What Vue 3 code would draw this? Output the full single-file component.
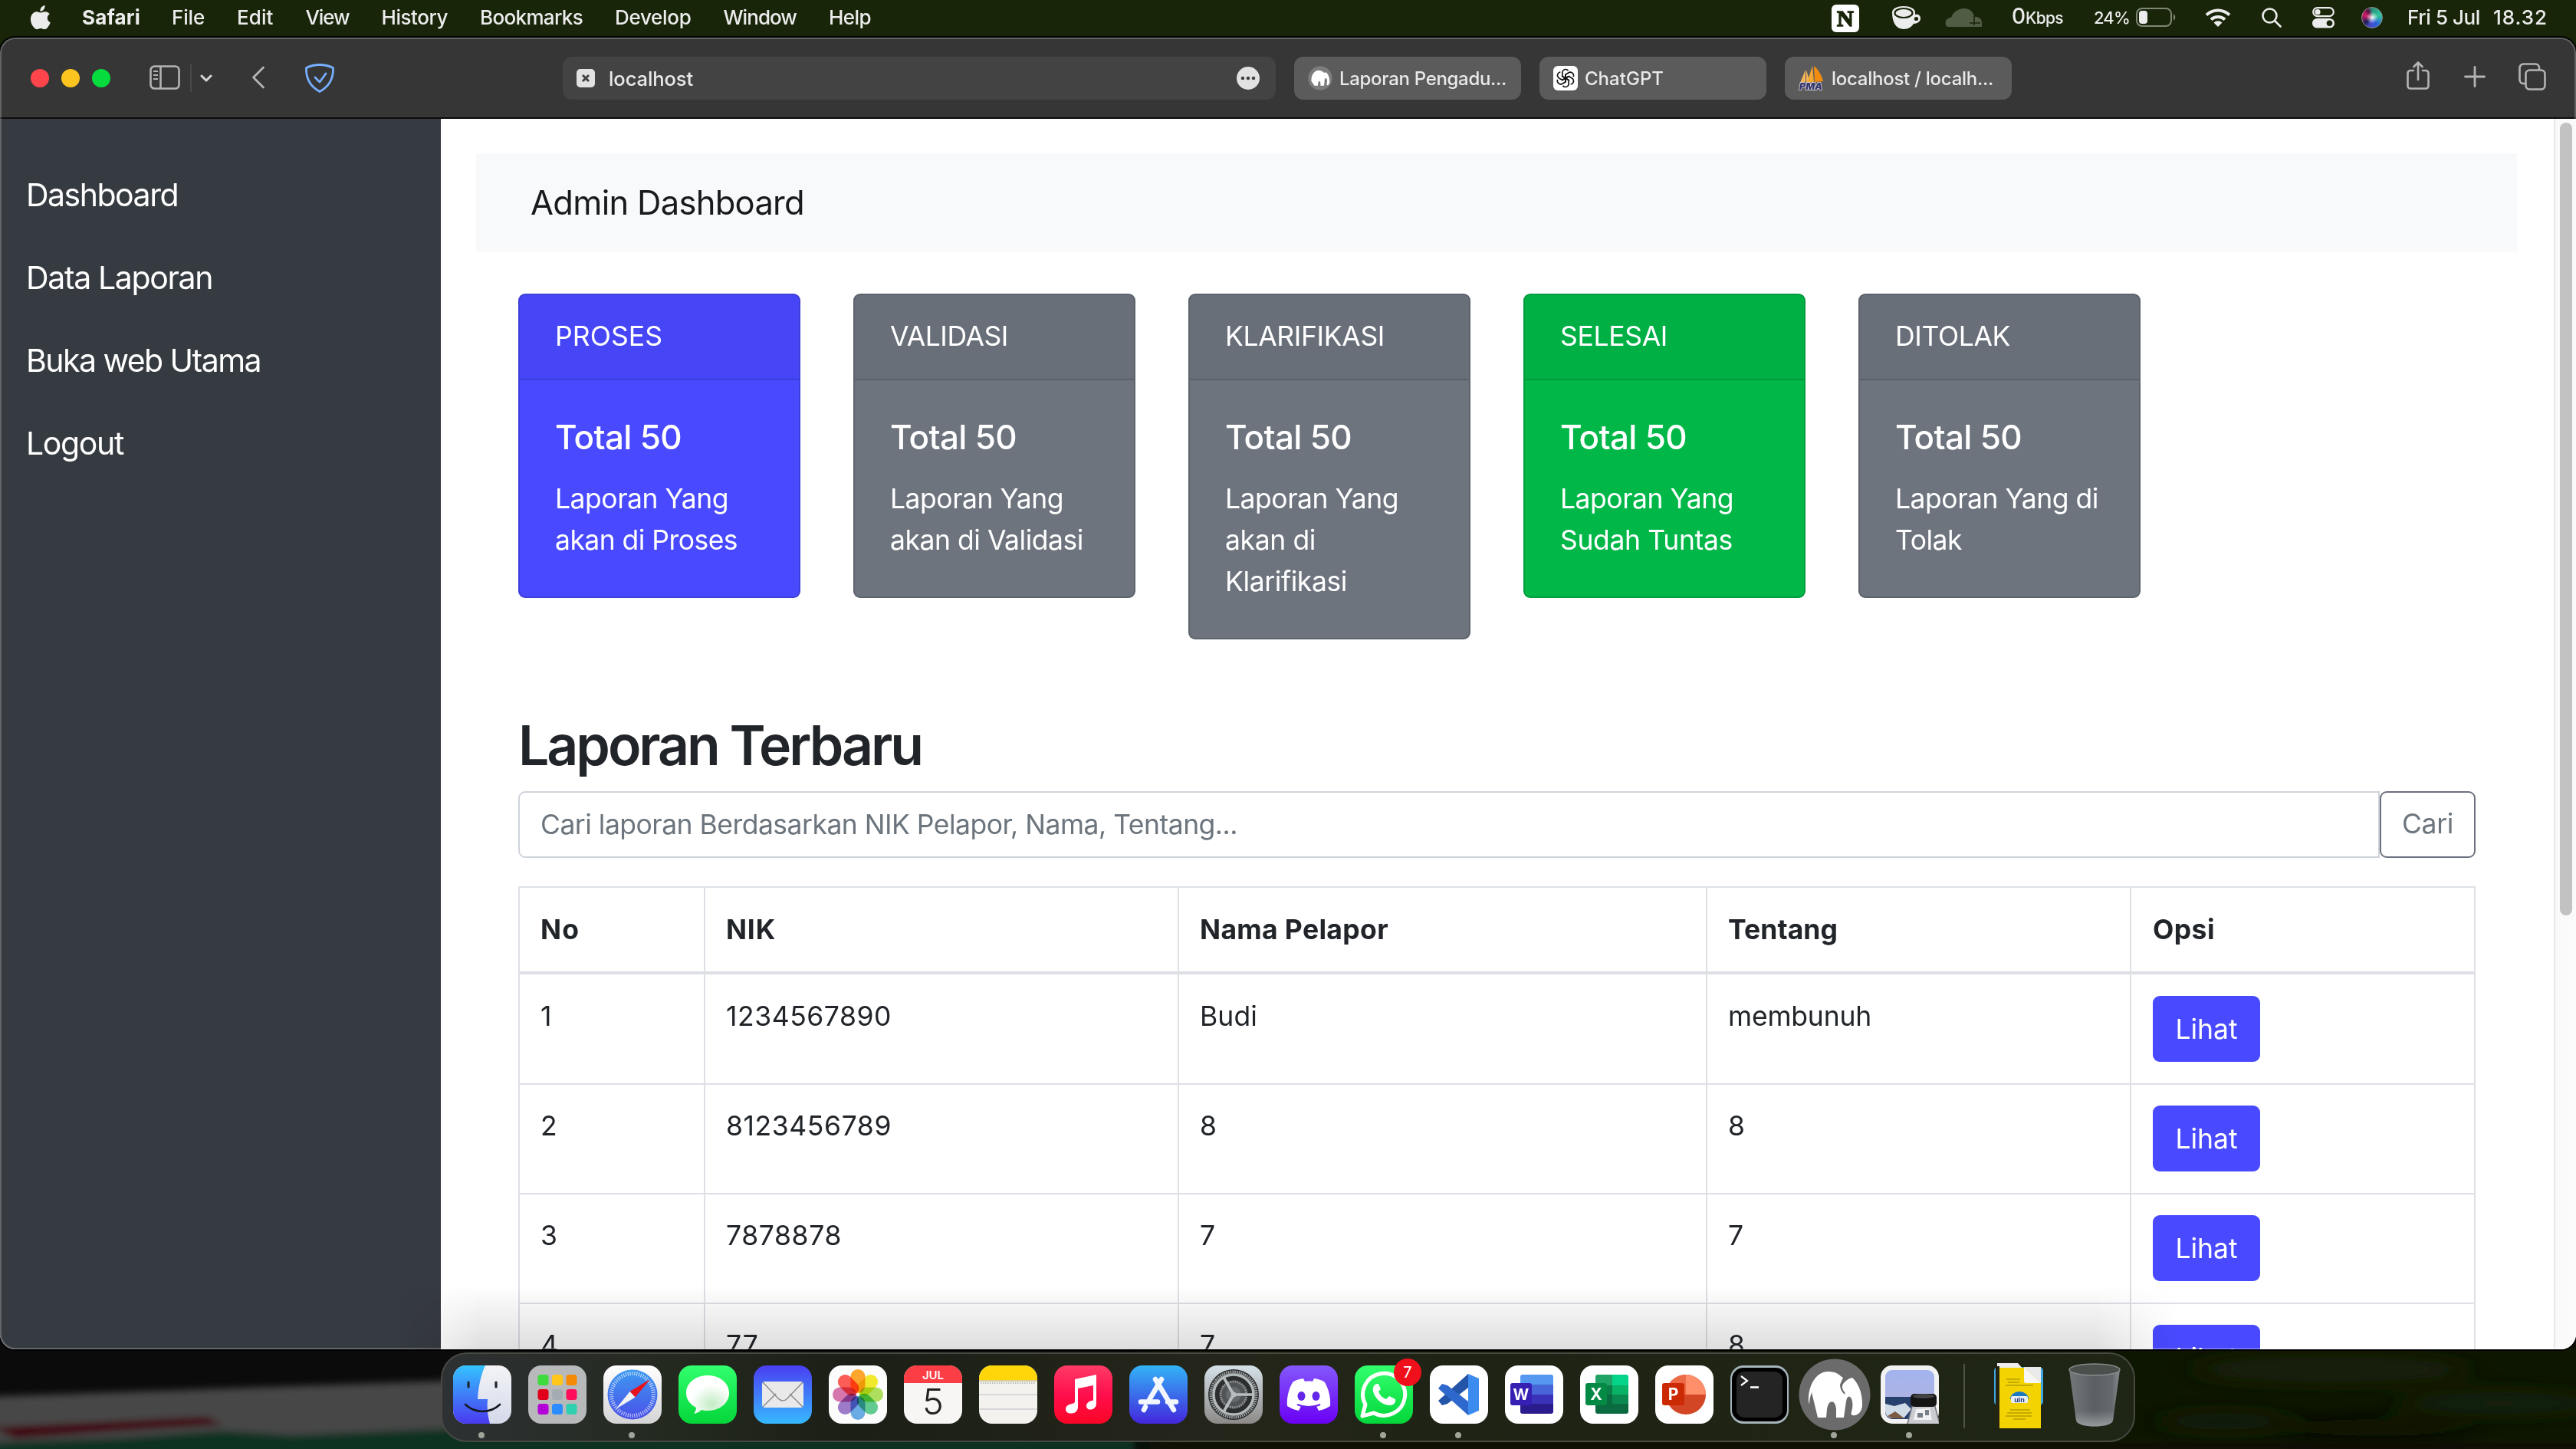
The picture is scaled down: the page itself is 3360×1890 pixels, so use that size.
<script setup>
// Spreads letter-spacing so that a label takes up the given width in pixels.
const vFit = {
  mounted(el, { value }) {
    if (!value) return
    el.style.letterSpacing = '0px'
    const natural = el.getBoundingClientRect().width
    const count = el.textContent.length
    el.style.letterSpacing = ((value - natural) / count).toFixed(3) + 'px'
  },
}

const menus = [
  ['File', 43], ['Edit', 47.500], ['View', 57], ['History', 86.500], ['Bookmarks', 134],
  ['Develop', 99.500], ['Window', 95.500], ['Help', 55],
]

const links = [
  ['Dashboard', 198], ['Data Laporan', 243], ['Buka web Utama', 306], ['Logout', 127],
]

const cards = [
  { head: 'PROSES', w: 140, tone: 'blue', lines: [['Laporan Yang', 226], ['akan di Proses', 238]] },
  { head: 'VALIDASI', w: 154, tone: 'grey', lines: [['Laporan Yang', 226], ['akan di Validasi', 252]] },
  { head: 'KLARIFIKASI', w: 208, tone: 'grey', lines: [['Laporan Yang', 226], ['akan di', 118], ['Klarifikasi', 159]] },
  { head: 'SELESAI', w: 140, tone: 'green', lines: [['Laporan Yang', 226], ['Sudah Tuntas', 225]] },
  { head: 'DITOLAK', w: 150, tone: 'grey', lines: [['Laporan Yang di', 265], ['Tolak', 87]] },
]

const heads = [['No', 51], ['NIK', 65], ['Nama Pelapor', 246], ['Tentang', 143], ['Opsi', 81]]
const rows = [
  [['1', 0], ['1234567890', 216], ['Budi', 75], ['membunuh', 187]],
  [['2', 0], ['8123456789', 216], ['8', 0], ['8', 0]],
  [['3', 0], ['7878878', 151], ['7', 0], ['7', 0]],
  [['4', 0], ['77', 43], ['7', 0], ['8', 0]],
]

const petals = ['#ff9500', '#f2e800', '#9fdb3a', '#3fc37a', '#4a9be0', '#8a5fc0', '#d05a9e', '#ff3b30']
const pads = ['#3ddb3d', '#ffc61a', '#f58a07', '#e0001b', '#a3adb2', '#ff0f5b', '#b400d8', '#2a8cff', '#2fd0b0']
const ticks = Array.from({ length: 60 }, (_, i) => i * 6)
</script>

<template>
  <div class="screen">
    <svg class="wallpaper" viewBox="0 0 3360 140" preserveAspectRatio="none">
      <defs>
        <filter id="soft" x="-5%" y="-50%" width="110%" height="200%"><feGaussianBlur stdDeviation="5" /></filter>
        <filter id="wide" x="-5%" y="-50%" width="110%" height="200%"><feGaussianBlur stdDeviation="26 12" /></filter>
      </defs>
      <rect width="3360" height="140" fill="#0a0b0a" />
      <rect x="1500" width="1900" height="140" fill="#0e1406" filter="url(#wide)" />
      <g filter="url(#soft)">
        <path d="M-20 72L620 50V140H-20Z" fill="#474747" />
        <path d="M-20 132L150 126L290 116L380 122L620 112H1480V180H-20Z" fill="#0a3022" />
        <path d="M-10 112L270 98L290 108L160 116L20 126Z" fill="#400410" />
      </g>
      <g filter="url(#wide)">
        <ellipse cx="3040" cy="36" rx="180" ry="16" fill="#1a240c" />
        <ellipse cx="3260" cy="80" rx="130" ry="14" fill="#182009" />
        <ellipse cx="2900" cy="104" rx="90" ry="12" fill="#141b08" />
        <ellipse cx="3100" cy="112" rx="130" ry="12" fill="#070a04" />
      </g>
    </svg>

    <header class="menubar">
      <svg class="apple" viewBox="0 0 26 32">
        <path d="M18.600 0c.2 2.300-.7 4.300-1.900 5.700-1.200 1.400-2.800 2.200-4.300 2.100-.2-2.100.7-4.200 1.800-5.500C15.400 1 17.200.1 18.600 0zM24.800 11.300c-1.900 1.200-3 3-3 5.200 0 2.600 1.500 4.700 3.900 5.700-.5 1.700-1.300 3.300-2.300 4.800-1.400 2.100-2.800 4.200-5 4.200s-2.800-1.300-5.300-1.300c-2.400 0-3.200 1.300-5.200 1.300-2.200 0-3.700-2.100-5.100-4.100C-.6 22.300-.9 15.300 1.800 11.700c1.500-2.200 3.700-3.400 5.900-3.400 2.300 0 3.700 1.300 5.500 1.300s2.900-1.300 5.600-1.300c2.100 0 4.600 1.100 6 3z" fill="#ececec" />
      </svg>
      <b v-fit="76">Safari</b>
      <nav><span v-for="m in menus" :key="m[0]" v-fit="m[1]">{{ m[0] }}</span></nav>
      <div class="status">
        <span class="notion">N</span>
        <svg width="38" height="32" viewBox="0 0 38 32"><path d="M1 9C1 4 8 1 16 1s15 3 15 8v3c4-1 7 1 7 5s-4 7-9 7c-3 4-6 7-13 7C6 31 1 22 1 9z" fill="#ececec" /><ellipse cx="16" cy="10" rx="11.500" ry="6" fill="#ececec" stroke="#182509" stroke-width="2.200" /><circle cx="32.500" cy="17.500" r="2.600" fill="#182509" /></svg>
        <svg width="48" height="24" viewBox="0 0 48 24" class="m32"><path d="M3 24C-2 20 1 12 8 12 10 5 17 0 25 0s12 5 13 11c6-1 10 3 10 8v5z" fill="#515c45" /><path d="M38 10v12M32 19h14" stroke="#182509" stroke-width="1.500" /></svg>
        <span class="kbps m39"><span class="zero">0</span><span v-fit="49">Kbps</span></span>
        <span class="pct" v-fit="47">24%</span>
        <svg width="52" height="26" viewBox="0 0 52 26" class="m8"><rect x="1" y="1" width="45" height="23" rx="7" fill="none" stroke="#7e8674" stroke-width="2" /><rect x="4" y="4" width="11" height="17" rx="4" fill="#ececec" /><path d="M49 8.500c3 1 3 7 0 8z" fill="#7e8674" /></svg>
        <svg width="34" height="25" viewBox="0 0 34 25" class="m38"><g fill="none" stroke="#ececec" stroke-width="4"><path d="M2 9.500a21.500 21.500 0 0 1 30 0" /><path d="M8 15.500a13 13 0 0 1 18 0" /></g><path d="M17 25l-5.500-5.500a8 8 0 0 1 11 0z" fill="#ececec" /></svg>
        <svg width="26" height="26" viewBox="0 0 26 26" class="m40"><g fill="none" stroke="#ececec" stroke-width="2.600" stroke-linecap="round"><circle cx="10.500" cy="10.500" r="9" /><path d="M17.500 17.500l7 7" /></g></svg>
        <svg width="29" height="28" viewBox="0 0 29 28" class="m40"><rect x="1.200" y="1.200" width="26.600" height="11" rx="5.500" fill="none" stroke="#ececec" stroke-width="2.200" /><circle cx="7" cy="6.700" r="3.600" fill="#ececec" /><rect y="15" width="29" height="12.600" rx="6.300" fill="#ececec" /><circle cx="22.500" cy="21.300" r="3.800" fill="#182509" /></svg>
        <i class="siri"></i>
        <span class="m34" v-fit="95">Fri 5 Jul</span>
        <span class="m17" v-fit="71">18.32</span>
      </div>
    </header>

    <section class="window">
      <div class="toolbar">
        <div class="lights"><i class="r"></i><i class="y"></i><i class="g"></i></div>
        <svg class="tb-side" width="40" height="32" viewBox="0 0 40 32" fill="none" stroke="#b4b4b4" stroke-width="2.600"><rect x="1.500" y="1.500" width="37" height="29" rx="5" /><path d="M14.500 2v28" /><path d="M5 8h6M5 13h6M5 18h6" stroke-width="2" /></svg>
        <i class="tb-div"></i>
        <svg class="tb-chev" width="16" height="10" viewBox="0 0 16 10" fill="none" stroke="#d6d6d6" stroke-width="3" stroke-linecap="round" stroke-linejoin="round"><path d="M2 2l6 6 6-6" /></svg>
        <svg class="tb-back" width="18" height="30" viewBox="0 0 18 30" fill="none" stroke="#b4b4b4" stroke-width="2.800" stroke-linecap="round" stroke-linejoin="round"><path d="M15.500 2L2.500 15l13 13" /></svg>
        <svg class="tb-shield" width="38" height="38" viewBox="0 0 38 38" fill="none" stroke="#76b0ff" stroke-width="2.800" stroke-linecap="round" stroke-linejoin="round"><path d="M19 1.500c6 0 12 1.300 17.500 4C37 18 33 29 19 36.500 5 29 1 18 1.500 5.500 7 2.800 13 1.500 19 1.500z" /><path d="M13 18l6 6 8-11" /></svg>
        <div class="url">
          <svg width="24" height="24" viewBox="0 0 24 24"><rect width="24" height="24" rx="5" fill="#e2e2e2" /><path d="M8 8l8 8M16 8l-8 8" stroke="#434343" stroke-width="3" /></svg>
          <span v-fit="110">localhost</span>
          <svg class="more" width="30" height="30" viewBox="0 0 30 30"><circle cx="15" cy="15" r="15" fill="#e2e2e2" /><g fill="#434343"><circle cx="8" cy="15" r="2.300" /><circle cx="15" cy="15" r="2.300" /><circle cx="22" cy="15" r="2.300" /></g></svg>
        </div>
        <div class="tab">
          <svg width="32" height="32" viewBox="0 0 94 94"><circle cx="47" cy="47" r="46" fill="#7d7d7d" /><path d="M13 58C12 36 24 17 40 17c10 0 17 4 20 9l10-1c6 4 14 20 13 36-1 9-4 13-9 13-5-1 1-8-1-22-2-7-8-7-9 1l-2 23H48V66c-1-11-8-11-9 0l-1 10H25z" fill="#fff" /></svg>
          <span v-fit="218">Laporan Pengadu...</span>
        </div>
        <div class="tab">
          <svg width="32" height="32" viewBox="0 0 32 32"><rect width="32" height="32" rx="6" fill="#fff" /><g fill="none" stroke="#111" stroke-width="1.700" stroke-linejoin="round"><path v-for="a in 6" :key="a" :transform="`rotate(${a * 60} 16 16)`" d="M11.800 13.600V8.800c0-2.400 2-4.300 4.300-4.300 1.500 0 2.700.6 3.500 1.700M11.800 13.600l4.200 2.500 5-2.900" /></g></svg>
          <span v-fit="103">ChatGPT</span>
        </div>
        <div class="tab">
          <svg width="34" height="32" viewBox="0 0 34 32"><path d="M9 5L2 22l7-1zM10 5v17h5z" fill="#f3b45a" /><path d="M18 0L11 22l9-1z" fill="#f6a834" /><path d="M20 0l1 21 11-1C30 12 26 5 20 0z" fill="#f28c0f" /><text x="1" y="30.500" textLength="30" lengthAdjust="spacingAndGlyphs" font-size="12" font-style="italic" font-weight="900" fill="#36366f" stroke="#ddd" stroke-width="1.400" paint-order="stroke">PMA</text></svg>
          <span v-fit="211">localhost / localh...</span>
        </div>
        <svg class="share" width="30" height="38" viewBox="0 0 30 38" fill="none" stroke="#b4b4b4" stroke-width="2.600" stroke-linecap="round" stroke-linejoin="round"><path d="M9 12H5a3.500 3.500 0 0 0-3.500 3.500V32A3.500 3.500 0 0 0 5 35.500h20a3.500 3.500 0 0 0 3.500-3.500V15.500A3.500 3.500 0 0 0 25 12h-4M15 24V2M9.500 7L15 1.500 20.500 7" /></svg>
        <svg class="plus" width="28" height="28" viewBox="0 0 28 28" stroke="#b4b4b4" stroke-width="2.800" stroke-linecap="round"><path d="M14 1.500v25M1.500 14h25" /></svg>
        <svg class="copies" width="36" height="36" viewBox="0 0 36 36" fill="none" stroke="#b4b4b4" stroke-width="2.600"><rect x="9.500" y="9.500" width="25" height="25" rx="5" /><path d="M9 27H6.500a5 5 0 0 1-5-5V6.500a5 5 0 0 1 5-5H22a5 5 0 0 1 5 5V9" /></svg>
      </div>

      <div class="page">
        <aside><a v-for="l in links" :key="l[0]"><span v-fit="l[1]">{{ l[0] }}</span></a></aside>
        <main>
          <div class="crumb"><span v-fit="357">Admin Dashboard</span></div>
          <div class="body">
            <div class="cards">
              <div v-for="c in cards" :key="c.head" class="card" :class="c.tone">
                <div class="card-head"><span v-fit="c.w">{{ c.head }}</span></div>
                <div class="card-body">
                  <h5><span v-fit="165">Total 50</span></h5>
                  <p v-for="l in c.lines" :key="l[0]"><span v-fit="l[1]">{{ l[0] }}</span></p>
                </div>
              </div>
            </div>
            <h1><span v-fit="526">Laporan Terbaru</span></h1>
            <div class="search">
              <div class="field"><span v-fit="909">Cari laporan Berdasarkan NIK Pelapor, Nama, Tentang...</span></div>
              <div class="go"><span v-fit="67">Cari</span></div>
            </div>
            <div class="table">
              <div class="tr th"><div v-for="h in heads" :key="h[0]"><span v-fit="h[1]">{{ h[0] }}</span></div></div>
              <div v-for="r in rows" :key="r[0][0]" class="tr">
                <div v-for="(d, i) in r" :key="i"><span v-fit="d[1]">{{ d[0] }}</span></div>
                <div><button><span v-fit="81">Lihat</span></button></div>
              </div>
            </div>
          </div>
        </main>
        <div class="track"><i></i></div>
      </div>
    </section>

    <div class="dock">
      <svg class="app" viewBox="0 0 76 76">
        <defs>
          <linearGradient id="fb" x2="0" y2="1"><stop stop-color="#34c3ff" /><stop offset="1" stop-color="#4a39f0" /></linearGradient>
          <linearGradient id="fw" x2="0" y2="1"><stop stop-color="#f4f4f6" /><stop offset="1" stop-color="#d3d9ea" /></linearGradient>
          <clipPath id="sq"><rect width="76" height="76" rx="17" /></clipPath>
        </defs>
        <g clip-path="url(#sq)"><rect width="76" height="76" fill="url(#fw)" /><path d="M0 0h42c-6 13-9 28-10 44h13c-1 11 0 22 3 32H0z" fill="url(#fb)" /></g>
        <path d="M20 22v6M56 22v6" stroke="#1c2733" stroke-width="3.200" stroke-linecap="round" /><path d="M16 51c13 12 32 12 45 0" fill="none" stroke="#14181f" stroke-width="2.600" stroke-linecap="round" />
      </svg>
      <svg class="app" viewBox="0 0 76 76"><rect width="76" height="76" rx="17" fill="#b7b9ba" /><rect v-for="(p, i) in pads" :key="i" :x="12.500 + (i % 3) * 18.500" :y="12 + Math.floor(i / 3) * 19" width="14" height="14" rx="3.500" :fill="p" /></svg>
      <svg class="app" viewBox="0 0 76 76">
        <defs><linearGradient id="sf" x2="0" y2="1"><stop stop-color="#3d9af2" /><stop offset="1" stop-color="#4a50e8" /></linearGradient><linearGradient id="wg" x2="0" y2="1"><stop stop-color="#fff" /><stop offset="1" stop-color="#d4d4d6" /></linearGradient></defs>
        <rect width="76" height="76" rx="17" fill="url(#wg)" /><circle cx="38" cy="38" r="32.500" fill="url(#sf)" /><path v-for="t in ticks" :key="t" :transform="`rotate(${t} 38 38)`" d="M38 8v5" stroke="#fff" stroke-opacity=".75" stroke-width="1" /><path d="M61 18L34.500 34l7 7.500z" fill="#e8121d" /><path d="M16 57l18.500-23 7 7.500z" fill="#f3f3f3" />
      </svg>
      <svg class="app" viewBox="0 0 76 76"><defs><linearGradient id="gr" x2="0" y2="1"><stop stop-color="#33ff6e" /><stop offset="1" stop-color="#04d63a" /></linearGradient><radialGradient id="bub" cx=".6" cy=".75"><stop stop-color="#c2ecc4" /><stop offset="1" stop-color="#fff" /></radialGradient></defs><rect width="76" height="76" rx="17" fill="url(#gr)" /><path d="M38 13c16 0 28 10 28 23S54 59 38 59c-3 0-5 0-8-1-3 3-6 4-10 5 2-3 3-5 3-8-8-4-13-11-13-19 0-13 12-23 28-23z" fill="url(#bub)" /></svg>
      <svg class="app" viewBox="0 0 76 76"><defs><linearGradient id="ml" x2="0" y2="1"><stop stop-color="#4a3ef2" /><stop offset="1" stop-color="#36b9ff" /></linearGradient></defs><rect width="76" height="76" rx="17" fill="url(#ml)" /><rect x="11" y="21" width="54" height="34" rx="4" fill="#e9e9e9" /><path d="M12 54l17-17M64 54L47 37M12 22l20 21c4 4 8 4 12 0l20-21" fill="none" stroke="#8f8f8f" stroke-width="1.600" /></svg>
      <svg class="app" viewBox="0 0 76 76"><rect width="76" height="76" rx="17" fill="#fcfcfc" /><rect v-for="(p, i) in petals" :key="p" class="petal" x="28.500" y="5" width="19" height="31" rx="9.500" :fill="p" fill-opacity=".82" :transform="`rotate(${i * 45} 38 38)`" /></svg>
      <svg class="app" viewBox="0 0 76 76"><g clip-path="url(#sq)"><rect width="76" height="76" fill="#f7f6f5" /><rect width="76" height="23" fill="#fb3d45" /></g><text x="38" y="18" text-anchor="middle" font-size="15" font-weight="600" fill="#fff">JUL</text><text x="38" y="64" text-anchor="middle" font-size="47" font-weight="300" fill="#222">5</text></svg>
      <svg class="app" viewBox="0 0 76 76"><g clip-path="url(#sq)"><rect width="76" height="76" fill="#f3f2ef" /><rect width="76" height="19" fill="#ffd60a" /><path d="M0 20h76" stroke="#b5a34a" stroke-width="1" /></g><path d="M2 23h72" stroke="#aaa" stroke-width="1.500" stroke-dasharray="1.500 1.500" /><path d="M0 38h76M0 57h76" stroke="#cfcfd2" stroke-width="1.500" /></svg>
      <svg class="app" viewBox="0 0 76 76"><defs><linearGradient id="mu" x2="0" y2="1"><stop stop-color="#ff3b66" /><stop offset=".5" stop-color="#ff0f4d" /><stop offset="1" stop-color="#fb0526" /></linearGradient></defs><rect width="76" height="76" rx="17" fill="url(#mu)" /><path d="M27 18l28-6v38c0 4-3 7-7 7.500s-6-2-6-5 3-6 9-7V26l-20 4v24c0 5-3 8-8 8.500-5 .5-8-2-8-5.500s3-6 8-7c3-.5 4-1 4-4z" fill="#fff" /></svg>
      <svg class="app" viewBox="0 0 76 76"><defs><linearGradient id="as" x2="0" y2="1"><stop stop-color="#33b4f7" /><stop offset="1" stop-color="#4326dd" /></linearGradient></defs><rect width="76" height="76" rx="17" fill="url(#as)" /><path d="M42 18L26.500 44M21 54l-2 4M34 18l24 40M15 47.500h22M50 47.500h11" stroke="#f2f7ff" stroke-width="6.500" stroke-linecap="round" /></svg>
      <svg class="app" viewBox="0 0 76 76"><defs><linearGradient id="st" x2="0" y2="1"><stop stop-color="#d5e1e8" /><stop offset="1" stop-color="#8d8a88" /></linearGradient></defs><rect width="76" height="76" rx="17" fill="url(#st)" /><circle cx="38" cy="38" r="33" fill="#2b2d2e" /><circle cx="38" cy="38" r="29.500" fill="none" stroke="#a2a6a8" stroke-width="4" stroke-dasharray="1.600 1.200" /><circle cx="38" cy="38" r="26" fill="none" stroke="#b3b8ba" stroke-width="3.500" /><circle cx="38" cy="38" r="17" fill="#515456" stroke="#8d9193" stroke-width="3" stroke-dasharray="2 1" /><circle cx="38" cy="38" r="10" fill="#666a6c" /><path d="M38 38h26M38 38L25 15.500M38 38L25 60.500" stroke="#b8bdbf" stroke-width="3.600" /><circle cx="38" cy="38" r="3.500" fill="#b8bdbf" /></svg>
      <svg class="app" viewBox="0 0 76 76"><defs><linearGradient id="dc" x2="0" y2="1"><stop stop-color="#8458fa" /><stop offset="1" stop-color="#6a00f5" /></linearGradient></defs><rect width="76" height="76" rx="17" fill="url(#dc)" /><path d="M31 17c-6 1-10 2-14 5-5 9-8 20-7 31 5 3 9 5 15 6l3-6c6 1.500 14 1.500 20 0l3 6c6-1 10-3 15-6 1-11-2-22-7-31-4-3-8-4-14-5l-2 4c-3-.6-7-.6-10 0z" fill="#fff" /><ellipse cx="28.500" cy="40" rx="5" ry="6" fill="#6227e8" /><ellipse cx="47.500" cy="40" rx="5" ry="6" fill="#6227e8" /><path d="M23 51c9 4 21 4 30 0" fill="none" stroke="#6a22ee" stroke-width="2" /></svg>
      <div class="app">
        <svg viewBox="0 0 76 76"><rect width="76" height="76" rx="17" fill="url(#gr)" /><path d="M10 66l4-15A27.500 27.500 0 1 1 25 62z" fill="none" stroke="#fff" stroke-width="5" stroke-linejoin="round" /><path d="M29 24c-4 1-6 5-5 10 3 10 12 18 22 18 5 0 8-4 7-8l-8-4-4 4c-5-2-8-5-10-10l3-3-3-7z" fill="#fff" /></svg>
        <b class="badge">7</b>
      </div>
      <svg class="app" viewBox="0 0 76 76"><rect width="76" height="76" rx="17" fill="#fff" /><path d="M50 11L11 46l5 6 7-2 27-21z" fill="#2455a8" /><path d="M50 65L11 30l5-6 7 2 27 21z" fill="#2f68cc" /><path d="M50 11l14 6v42l-14 6z" fill="#3c8cf0" /></svg>
      <svg class="app" viewBox="0 0 76 76"><rect width="76" height="76" rx="17" fill="#fff" /><g clip-path="url(#doc)"><rect x="20" y="12" width="43" height="13" fill="#5598f2" /><rect x="20" y="25" width="43" height="13" fill="#4765d8" /><rect x="20" y="38" width="43" height="12" fill="#3a32b8" /><rect x="20" y="50" width="43" height="13" fill="#2a1c8c" /></g><clipPath id="doc"><rect x="20" y="12" width="43" height="51" rx="3" /></clipPath><rect x="7" y="23" width="28" height="29" rx="3" fill="#3620b4" /><text x="21" y="45" text-anchor="middle" font-size="20" font-weight="700" fill="#fff">W</text></svg>
      <svg class="app" viewBox="0 0 76 76"><rect width="76" height="76" rx="17" fill="#fff" /><g clip-path="url(#doc)"><rect x="20" y="12" width="22" height="14" fill="#21a366" /><rect x="42" y="12" width="22" height="14" fill="#04d38a" /><rect x="20" y="26" width="22" height="12" fill="#0b7f48" /><rect x="42" y="26" width="22" height="12" fill="#08b368" /><rect x="20" y="38" width="44" height="26" fill="#0b6b40" /><rect x="42" y="38" width="22" height="12" fill="#0a8a50" /></g><rect x="7" y="23" width="28" height="29" rx="3" fill="#038a45" /><text x="21" y="45" text-anchor="middle" font-size="21" font-weight="700" fill="#fff">X</text></svg>
      <svg class="app" viewBox="0 0 76 76"><rect width="76" height="76" rx="17" fill="#fff" /><circle cx="40" cy="38" r="26" fill="#d24625" /><path d="M40 12a26 26 0 0 0-26 26h26z" fill="#ed6c47" /><path d="M40 12a26 26 0 0 1 26 26H40z" fill="#ff8f6b" /><rect x="9" y="23" width="29" height="29" rx="3" fill="#cc2a05" /><text x="23.500" y="45" text-anchor="middle" font-size="21" font-weight="700" fill="#fff">P</text></svg>
      <svg class="app" viewBox="0 0 76 76"><rect width="76" height="76" rx="17" fill="#a5b4bb" /><rect x="2" y="3" width="72" height="70" rx="15" fill="#000" /><rect x="8" y="8" width="60" height="60" rx="10" fill="#242424" /><path d="M14 14l8 6-8 6" fill="none" stroke="#fff" stroke-width="2.200" /><path d="M26 28.500h11" stroke="#fff" stroke-width="2.600" /></svg>
      <div class="app"><svg class="mamp" viewBox="0 0 94 94"><circle cx="47" cy="47" r="46.500" fill="#6b6b6c" /><path d="M13 56C12 34 24 17 38 17c8 0 13 2 17 6l3 2-4 9c0 5 2 9 5 12 2 1 2 0 1-2-3-4-4-7-2-11 3-4 7-7 12-8 6 5 14 18 13 37-1 8-6 13-13 12-4-2 2-7 0-18-2-9-7-8-8 0l-3 21H49V66c-1-13-10-13-12 0l-1 11H25l-8-33c-2 6-3 10-3 16z" fill="#fff" /></svg></div>
      <svg class="app" viewBox="0 0 76 76"><defs><linearGradient id="sky" x2="0" y2="1"><stop stop-color="#a2b3ee" /><stop offset="1" stop-color="#b6b4dc" /></linearGradient></defs><rect width="76" height="76" rx="15" fill="#f2f2f2" /><rect x="6" y="6" width="64" height="64" rx="9" fill="url(#sky)" /><path d="M6 41h64v29H15a9 9 0 0 1-9-9z" fill="#27406e" /><path d="M6 50l12 3 14-4 8 8-10 12H15a9 9 0 0 1-9-9z" fill="#cfdbe6" /><path d="M9 66l10-6 12 9H15z" fill="#7c5b45" /><path d="M42 50h28l7 26c0 4-42 4-42 0z" fill="#c9cbd0" stroke="#70737a" stroke-width="1.500" /><path d="M46 57l18-1 3 15H43z" fill="#f1f1f3" /><path d="M48 62h7v6h-7zM58 58h5v7h-5z" fill="#777f88" /><rect x="39" y="37" width="34" height="17" rx="5" fill="#141414" /><ellipse cx="56" cy="40" rx="14" ry="3" fill="#444" /></svg>
      <i class="sep"></i>
      <svg class="paper" viewBox="0 0 66 85"><rect x="1" y="5" width="64" height="50" rx="5" fill="#3fa5e0" /><path d="M5 0h27l7 8H5z" fill="#eee" /><path d="M5 6h57v79H5z" fill="#f3d302" /><path d="M3 4h5v81H3z" fill="#252413" /><path d="M40 5l22 21H43a3 3 0 0 1-3-3z" fill="#f6f6f6" /><path d="M40 5h22v21z" fill="#eaeaea" /><path d="M17 21h18M19 25h15M16 29h36M22 61h26M18 65h32M16 69h34M26 73h16" stroke="#9a8500" stroke-width="1.200" /><path d="M22 47a12 10 0 0 1 24 0z" fill="#1879c0" /><rect x="23" y="43" width="22" height="9" rx="2" fill="#e8eef4" /><text x="34" y="50.500" text-anchor="middle" font-size="9" font-weight="700" fill="#203a80">uin</text></svg>
      <svg class="trash" viewBox="0 0 68 84"><defs><linearGradient id="tr"><stop stop-color="#73777a" /><stop offset=".5" stop-color="#5b5f64" /><stop offset=".85" stop-color="#666a6e" /><stop offset="1" stop-color="#8a8d90" /></linearGradient><linearGradient id="tb" x2="0" y2="1"><stop stop-color="#a5a8aa" stop-opacity="0" /><stop offset="1" stop-color="#a5a8aa" stop-opacity=".8" /></linearGradient></defs><path d="M1 9l9 66c2 10 46 10 48 0l9-66z" fill="url(#tr)" /><path d="M8 62h52l-2 13c-2 10-46 10-48 0z" fill="url(#tb)" /><ellipse cx="34" cy="8.500" rx="33" ry="7.500" fill="#4b504d" stroke="#878b8b" stroke-width="1.500" /></svg>
      <div class="dots"><i v-for="n in [0, 2, 12, 13, 18, 19]" :key="n" :style="{ left: n * 98 + 'px' }"></i></div>
    </div>
  </div>
</template>

<style>
body { margin: 0; background: #0a0b0a; overflow: hidden; }
</style>

<style scoped>
* { box-sizing: border-box; }
.screen { position: relative; width: 3360px; height: 1890px; overflow: hidden; background: #182509; font-family: Inter, "Liberation Sans", sans-serif; white-space: nowrap; }
.wallpaper { position: absolute; left: 0; top: 1750px; width: 3360px; height: 140px; }
svg { display: block; flex: none; }
svg text { font-family: Inter, "Liberation Sans", sans-serif; }
.petal { mix-blend-mode: multiply; }

.menubar { display: flex; align-items: center; height: 49px; padding: 0 37px 4px 40px; background: #182509; color: #ececec; font-size: 26px; font-weight: 450; line-height: 46px; }
.apple { width: 26px; height: 32px; margin-right: 41px; }
.menubar b { font-weight: 700; }
nav { display: flex; gap: 42px; margin-left: 41px; }
nav span { display: block; }
.status { display: flex; align-items: center; margin-left: auto; }
.status .notion { width: 36px; height: 36px; margin: 2px 42px 0 0; border-radius: 6px; background: #fff; color: #182509; font: 900 30px/36px "Liberation Serif", serif; text-align: center; -webkit-text-stroke: 1.500px #182509; }
.m32 { margin-left: 32px; } .m39 { margin-left: 39px; } .m8 { margin-left: 8px; } .m38 { margin-left: 38px; }
.m40 { margin-left: 40px; } .m34 { margin-left: 32px; } .m17 { margin-left: 17px; }
.kbps { display: flex; align-items: baseline; font-size: 21px; }
.zero { font-size: 28px; }
.pct { margin-left: 40px; font-size: 22px; }
.siri { width: 28px; height: 28px; margin-left: 35px; border-radius: 50%; border: 1px solid #8a8f90; background: radial-gradient(circle at 50% 50%, #fff 0, rgba(255,255,255,.6) 14%, transparent 42%), conic-gradient(#2a8f7c, #2ec79b 20%, #2a60d8 40%, #4a4ac8 55%, #1c1f52 65%, #d81c68 80%, #5a1245 92%, #2a8f7c); }

.window { position: relative; display: flex; flex-direction: column; height: 1711px; overflow: hidden; border-radius: 20px; background: #363636; box-shadow: 0 0 0 2px #000; }
.window::after { content: ""; position: absolute; inset: 0; border: 2px solid rgba(255,255,255,.22); border-radius: 20px; pointer-events: none; }
.toolbar { display: flex; align-items: center; flex: none; height: 106px; padding: 2px 39px 0 40px; border-bottom: 2px solid #0c0c0c; color: #e9e9e9; font-weight: 450; }
.lights { display: flex; gap: 16px; }
.lights i { width: 24px; height: 24px; border-radius: 50%; }
.r { background: #ff454c; } .y { background: #fcc41e; } .g { background: #06dc3d; }
.tb-side { margin: -2px 0 0 51px; }
.tb-div { width: 2px; height: 36px; margin-left: 13px; background: #484848; }
.tb-chev { margin-left: 11px; }
.tb-back { margin: -2px 0 0 51px; }
.tb-shield { margin-left: 52px; }
.url { display: flex; align-items: center; width: 930px; height: 56px; margin-left: 298px; padding: 0 21px 0 18px; border-radius: 12px; background: #434343; font-size: 25.500px; }
.url span { margin-left: 18px; }
.more { margin-left: auto; }
.tab { display: flex; align-items: center; gap: 9px; width: 296px; height: 56px; margin-left: 24px; padding-left: 18px; border-radius: 12px; background: #5b5b5b; font-size: 24px; overflow: hidden; }
.share { margin: -6px 0 0 auto; }
.plus { margin: -4px 0 0 45px; }
.copies { margin: -4px 0 0 43px; }

.page { display: flex; height: 1605px; background: #fff; color: #212529; font-size: 35.500px; font-weight: 430; line-height: 54px; }
aside { width: 575px; flex: none; padding: 45px 0 0 34px; background: #363a41; color: #fff; font-size: 41px; line-height: 108px; }
aside a { display: block; }
main { flex: none; width: 2756px; padding: 45px 48px 0 46px; overflow: hidden; }
.crumb { height: 128px; padding-left: 71px; background: #f8f9fb; color: #191a1b; font-size: 43.500px; line-height: 128px; }
.body { padding: 55px 54px 0 55px; }
.cards { display: flex; align-items: flex-start; gap: 69px; height: 546px; }
.card { width: 368px; border-radius: 9px; border: 2px solid rgba(0,0,0,.14); color: #fff; }
.blue { background: #4949ff; } .grey { background: #6d747e; } .green { background: #00b748; }
.card-head { padding: 27px 0 28px 46px; border-bottom: 2px solid rgba(0,0,0,.125); background: rgba(0,0,0,.035); }
.card-body { padding: 47px 0 46px 46px; }
h5 { margin: 0 0 27px; font-size: 44px; font-weight: 540; line-height: 54px; }
p { margin: 0; }
h1 { margin: 0 0 17px; font-size: 71.500px; font-weight: 570; line-height: 86px; }
.search { display: flex; width: 2553px; height: 87px; line-height: 86px; color: #6c757d; }
.field { flex: 1; padding-left: 27px; border: 2px solid #ced4da; border-radius: 9px 0 0 9px; line-height: 84px; }
.go { width: 125px; border: 2px solid #6c717f; border-radius: 9px; text-align: center; line-height: 82px; }
.table { width: 2553px; margin-top: 37px; border-top: 2px solid #dee2e6; }
.tr { display: grid; grid-template-columns: 242px 618px 689px 553px 451px; height: 143px; border-bottom: 2px solid #dee0e6; }
.tr > div { padding: 27px 0 0 27px; border-left: 2px solid #dee0e6; }
.tr > div:last-child { border-right: 2px solid #dee0e6; padding-left: 28px; }
.th { height: 113px; font-weight: 700; border-bottom: 4px solid #dee0e6; }
.th > div { padding-top: 28px; }
.th + .tr { height: 144px; }
.th + .tr > div { padding-top: 28px; }
button { display: block; width: 140px; height: 86px; padding: 0; border: 0; border-radius: 9px; background: #4949ff; color: #fff; font: inherit; line-height: 85px; text-align: center; }
.track { flex: 1; padding: 5px 5px 0 6px; border-left: 2px solid #e7e7e7; background: #fafafa; }
.track i { display: block; width: 16px; height: 1034px; border-radius: 8px; background: #c2c2c2; }

.dock { position: absolute; left: 575px; top: 1764px; display: flex; align-items: center; width: 2210px; height: 117px; padding: 0 14px 0; border: 2px solid rgba(255,255,255,.17); border-radius: 34px; background: linear-gradient(90deg, #2d3133, #24291f 14%, #1b1f15 24%, #25261b 46%, #1e2315 60%, #202615) padding-box, #22251c; }
.dock::before { content: ""; position: absolute; left: -60px; right: -60px; top: -90px; height: 84px; background: linear-gradient(transparent, rgba(0,0,0,.13)); mask-image: linear-gradient(90deg, transparent, #000 110px calc(100% - 110px), transparent); }
.app { position: relative; width: 76px; height: 76px; margin: -7px 22px 0 0; flex: none; }
.app > svg { width: 76px; height: 76px; }
.app > .mamp { position: absolute; left: -9px; top: -9px; width: 94px; height: 94px; }
.badge { position: absolute; left: 51px; top: -9px; width: 36px; height: 36px; border-radius: 50%; background: #f0101c; color: #fff; font-size: 20px; font-weight: 400; line-height: 36px; text-align: center; }
.sep { width: 2px; height: 84px; margin: -3px 0 0 10px; background: #4e5348; }
.paper { width: 66px; height: 85px; margin: -5px 0 0 37px; }
.trash { width: 68px; height: 84px; margin: -5px 0 0 32px; }
.dots { position: absolute; left: 47px; top: 102px; }
.dots i { position: absolute; width: 8px; height: 8px; border-radius: 50%; background: #a0a59a; }
</style>
